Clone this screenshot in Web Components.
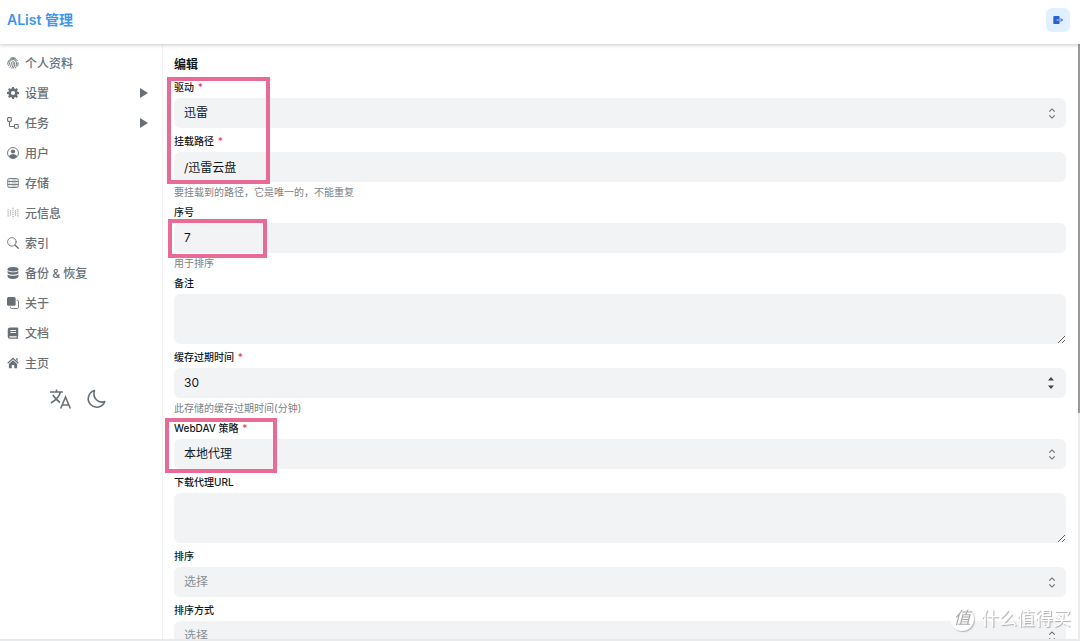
<!DOCTYPE html>
<html lang="zh-CN">
<head>
<meta charset="UTF-8">
<meta name="viewport" content="width=device-width, initial-scale=1.0">
<title>AList 管理</title>
<style>
  html, body { height: 100%; margin: 0; }
  body {
    font-family: Inter, "Noto Sans CJK SC", sans-serif;
    font-size: 12px;
    color: #11181c;
    background: #fff;
    overflow: hidden;
    --gris: #687076;
    --campo: #f1f3f5;
    --rosa: #ea6a96;
  }
</style>
</head>
<body>
<alist-app>
  <alist-header slot="header">AList 管理</alist-header>
  <side-menu slot="menu">
    <side-item icon="finger">个人资料</side-item>
    <side-item icon="gear" submenu>设置</side-item>
    <side-item icon="flow" submenu>任务</side-item>
    <side-item icon="user">用户</side-item>
    <side-item icon="drive">存储</side-item>
    <side-item icon="meta">元信息</side-item>
    <side-item icon="search">索引</side-item>
    <side-item icon="database">备份 &amp; 恢复</side-item>
    <side-item icon="copy">关于</side-item>
    <side-item icon="book">文档</side-item>
    <side-item icon="home">主页</side-item>
  </side-menu>
  <storage-form></storage-form>
</alist-app>
<water-mark>什么值得买</water-mark>

<script>
  const icons = {
    finger: '<g fill="none" stroke="currentColor" stroke-width="1.300" stroke-linecap="round"><path d="M2 5.500A7 7 0 0 1 14 5M.9 9.500A8 8 0 0 1 2 5.500M2 12c1.500-1.700 1-4 2-6a4.500 4.500 0 0 1 8.500 1c.4 2 .2 3.500-.3 5M4 13.700c2-2 1.300-4.500 2-6.200a2.300 2.300 0 0 1 4.300.7c.2 2.500-.4 4.500-1.800 6.800M6.300 14.800C8 12.500 8.300 10.500 8.200 8.300M14.700 7.500c.2 1.800 0 3.200-.5 4.500M11.900 13.500l-.7 1.200M5 1.500a7.500 7.500 0 0 1 6 0"/></g>',
    gear: '<path fill-rule="evenodd" d="M6.700 0h2.600l.4 2 1.400.6 1.700-1.200 1.800 1.800-1.200 1.700.6 1.400 2 .4v2.600l-2 .4-.6 1.400 1.200 1.700-1.800 1.800-1.700-1.200-1.400.6-.4 2H6.700l-.4-2-1.400-.6-1.700 1.200-1.800-1.800 1.200-1.700L2 9.700l-2-.4V6.700l2-.4.6-1.400-1.200-1.700 1.800-1.800 1.700 1.200L6.300 2zM8 5.200a2.800 2.800 0 1 0 0 5.600 2.800 2.800 0 0 0 0-5.600z"/>',
    flow: '<g fill="none" stroke="currentColor" stroke-width="1.400"><rect x=".8" y=".8" width="5" height="5" rx="1"/><rect x="10" y="10" width="5" height="5" rx="1"/><path d="M3.300 6v5.500c0 .8.400 1.200 1.200 1.200H10"/></g>',
    user: '<circle cx="8" cy="8" r="7.300" fill="none" stroke="currentColor" stroke-width="1.200"/><circle cx="8" cy="6" r="2.800"/><path d="M2.600 12.700C3.500 10.400 5.500 9.800 8 9.800s4.500.6 5.400 2.900A7 7 0 0 1 8 15.200a7 7 0 0 1-5.400-2.500z"/>',
    drive: '<g fill="none" stroke="currentColor" stroke-width="1.200"><rect x="1" y="2" width="14" height="12" rx="2"/><path d="M1 6h14M1 10h14"/><path d="M6 4h7M6 8h7M6 12h7" stroke-width=".8"/></g><path d="M3 3.500h1.300v1H3zM3 7.500h1.300v1H3zM3 11.500h1.300v1H3z"/>',
    meta: '<g fill="none" stroke="currentColor" stroke-width="1.300" stroke-dasharray="1.500 1.200" opacity=".8"><path d="M1.500 3v10M4.700 4.500v8M8 1v14M11.300 4.500v8M14.500 3v10"/></g>',
    search: '<g fill="none" stroke="currentColor" stroke-width="1.200" stroke-linecap="round"><circle cx="6.500" cy="6.500" r="5.700"/><path d="M10.700 10.700L15 15" stroke-width="1.700"/></g>',
    database: '<ellipse cx="8" cy="3" rx="7.200" ry="2.900"/><path d="M.8 5c1 1.500 4.200 2 7.200 2s6.200-.5 7.200-2v2.500C15.200 9 12 10.200 8 10.200S.8 9 .8 7.500zM.8 9.500c1 1.500 4.200 2 7.200 2s6.200-.5 7.200-2V13c0 1.500-3.200 2.900-7.200 2.900S.8 14.500.8 13z"/>',
    copy: '<rect x="0" y="0" width="11.500" height="11.500" rx="2"/><path d="M13 4.500h.8c.8 0 1.500.6 1.500 1.500v7.800c0 .8-.7 1.500-1.500 1.500H6c-.9 0-1.500-.7-1.500-1.500V13" fill="none" stroke="currentColor" stroke-width="1.200"/>',
    book: '<path fill-rule="evenodd" d="M4 .5h9.500c.8 0 1.500.6 1.500 1.500v9.500c0 .5-.3.800-.6 1v1.600c.4.200.6.400.6.700 0 .4-.3.700-.8.700H4a3 3 0 0 1-3-3v-9a3 3 0 0 1 3-3zM4.500 4v1.300h7.500V4zm0 2.700V8h7.500V6.700zM4 12.200a.9.900 0 0 0 0 1.800h8.700v-1.800z"/>',
    home: '<path d="M8 .8l7.600 7-1 1.100L8 2.900 1.400 8.900l-1-1.100zM12.200 1.500h2v4l-2-1.900zM8 4.200l5.500 5V15H9.700v-4.500H6.300V15H2.500V9.200z"/>',
    exit: '<path d="M2 1.500h7c1 0 1.500.6 1.500 1.500v10c0 1-.5 1.500-1.500 1.500H2c-1 0-1.500-.5-1.500-1.500V3c0-1 .5-1.500 1.500-1.500z"/><path d="M5.500 8h5" stroke="#e1f0ff" stroke-width="1.300"/><path d="M10.500 8h4.700M12.500 5.300L15.200 8l-2.700 2.700" fill="none" stroke="currentColor" stroke-width="1.500"/>'
  };

  const svg = (name) => `<svg viewBox="0 0 16 16" fill="currentColor" aria-hidden="true">${icons[name]}</svg>`;

  class AlistApp extends HTMLElement {
    constructor() {
      super();
      this.attachShadow({ mode: 'open' }).innerHTML = `
        <style>
          :host {
            display: flex;
            flex-direction: column;
            height: 100vh;
          }
          .cuerpo {
            flex: 1;
            min-height: 0;
            display: flex;
          }
          main {
            flex: 1;
            min-width: 0;
            overflow: auto;
            scrollbar-width: none;
          }
          .barra {
            width: 2px;
            background: #ebebeb;
          }
          .barra div {
            height: 62%;
            background: #999;
          }
          footer {
            height: 2px;
            background: #e9eaeb;
          }
        </style>
        <slot name="header"></slot>
        <div class="cuerpo">
          <slot name="menu"></slot>
          <main><slot></slot></main>
          <div class="barra"><div></div></div>
        </div>
        <footer></footer>
      `;
    }
  }
  customElements.define('alist-app', AlistApp);

  class AlistHeader extends HTMLElement {
    constructor() {
      super();
      this.attachShadow({ mode: 'open' }).innerHTML = `
        <style>
          :host {
            display: flex;
            align-items: center;
            justify-content: space-between;
            height: 44px;
            padding: 0 10px 4px 7px;
            box-sizing: border-box;
            box-shadow: 0 1px 4px rgba(0, 0, 0, .22);
            z-index: 1;
          }
          a {
            font-size: 14px;
            font-weight: 600;
            line-height: 20px;
            color: #4094f0;
            text-decoration: none;
          }
          button {
            display: grid;
            place-items: center;
            width: 24px;
            height: 24px;
            padding: 0;
            border: none;
            border-radius: 6px;
            background: #e1f0ff;
            color: #2862d2;
            cursor: pointer;
          }
          svg { width: 10px; height: 10px; }
        </style>
        <a href="#"><slot></slot></a>
        <button type="button" aria-label="logout">${svg('exit')}</button>
      `;
    }
  }
  customElements.define('alist-header', AlistHeader);

  class SideMenu extends HTMLElement {
    constructor() {
      super();
      this.attachShadow({ mode: 'open' }).innerHTML = `
        <style>
          :host {
            display: block;
            width: 162px;
            padding-top: 4px;
            box-sizing: content-box;
            border-right: 1px solid #f1f2f4;
            color: var(--gris);
          }
          .ajustes {
            display: flex;
            justify-content: center;
            gap: 12px;
            padding: 9px 6px 0 0;
          }
          button {
            padding: 0;
            border: none;
            background: none;
            color: inherit;
            width: 24px;
            height: 24px;
            cursor: pointer;
          }
          svg { display: block; width: 24px; height: 24px; }
        </style>
        <nav><slot></slot></nav>
        <div class="ajustes">
          <button type="button" aria-label="language">
            <svg viewBox="0 0 24 24" fill="none" stroke="currentColor" stroke-width="1.600">
              <path d="M2 5h13M8.500 2.500V5M12.500 5C11.500 9 8 13 3 16M4.800 8c2 3 4.300 5.400 7.200 7.500M12.700 21.500L17.500 10l4.800 11.500M14.300 18h6.400"/>
            </svg>
          </button>
          <button type="button" aria-label="theme">
            <svg viewBox="0 0 24 24" fill="none" stroke="currentColor" stroke-width="1.600" stroke-linejoin="round">
              <path d="M10.500 3.500A8.500 8.500 0 1 0 20.800 14.500C14.500 17 8 11 10.500 3.500z"/>
            </svg>
          </button>
        </div>
      `;
    }
  }
  customElements.define('side-menu', SideMenu);

  class SideItem extends HTMLElement {
    constructor() {
      super();
      this.attachShadow({ mode: 'open' });
    }

    connectedCallback() {
      const flecha = this.hasAttribute('submenu')
        ? '<svg class="flecha" viewBox="0 0 8 10" fill="currentColor"><path d="M0 0l8 5-8 5z"/></svg>'
        : '';
      this.shadowRoot.innerHTML = `
        <style>
          :host { display: block; }
          a {
            display: flex;
            align-items: center;
            gap: 6px;
            height: 30px;
            padding: 0 14px 0 7px;
            color: inherit;
            font-weight: 500;
            text-decoration: none;
          }
          span {
            flex: 1;
            padding-bottom: 2px;
          }
          svg { width: 12px; height: 12px; }
          .flecha { width: 8px; height: 10px; }
        </style>
        <a href="#">${svg(this.getAttribute('icon'))}<span><slot></slot></span>${flecha}</a>
      `;
    }
  }
  customElements.define('side-item', SideItem);

  class FormField extends HTMLElement {
    constructor() {
      super();
      this.attachShadow({ mode: 'open' });
      this._data = null;
    }

    set data(objeto) {
      this._data = objeto;
      this.render();
    }

    control() {
      const { tipo, valor } = this._data;
      if (tipo === 'select') {
        return `
          <select id="campo" class="${valor === '选择' ? 'vacio' : ''}"><option>${valor}</option></select>
          <svg viewBox="0 0 8 12" fill="none" stroke="#687076" stroke-width="1.200"><path d="M1 4l3-3 3 3M1 8l3 3 3-3"/></svg>`;
      }
      if (tipo === 'textarea') {
        return '<textarea id="campo"></textarea>';
      }
      if (tipo === 'stepper') {
        return `
          <input id="campo" type="number" value="${valor}">
          <svg class="pasos" viewBox="0 0 8 14" fill="#444"><path d="M1 4.500L4 1l3 3.500zM1 9.500L4 13l3-3.500z"/></svg>`;
      }
      return `<input id="campo" type="text" value="${valor}">`;
    }

    render() {
      const { titulo, requerido, ayuda } = this._data;
      this.shadowRoot.innerHTML = `
        <style>
          :host {
            display: grid;
            gap: 3px;
          }
          label {
            font-size: 10px;
            font-weight: 500;
            line-height: 16px;
          }
          label span {
            margin-left: 1px;
            color: #e5484d;
          }
          .caja {
            display: grid;
            align-items: center;
          }
          .caja > * { grid-area: 1 / 1; }
          input, select, textarea {
            display: block;
            width: 100%;
            height: 30px;
            margin: 0;
            padding: 0 10px 1px;
            box-sizing: border-box;
            border: none;
            border-radius: 6px;
            outline: none;
            background: var(--campo);
            color: inherit;
            font: inherit;
            appearance: none;
          }
          input[type=number] { appearance: textfield; }
          .vacio { color: #889096; }
          textarea {
            height: 50px;
            padding: 6px 10px;
            resize: vertical;
          }
          svg {
            justify-self: end;
            width: 8px;
            height: 11px;
            margin-right: 10px;
            pointer-events: none;
          }
          .pasos {
            height: 14px;
            margin-right: 11px;
          }
          p {
            margin: 0;
            font-size: 10px;
            line-height: 14px;
            color: #7b8288;
          }
        </style>
        <label for="campo">${titulo}${requerido ? ' <span>*</span>' : ''}</label>
        <div class="caja">${this.control()}</div>
        ${ayuda ? `<p>${ayuda}</p>` : ''}
      `;
    }
  }
  customElements.define('form-field', FormField);

  const campos = [
    { titulo: '驱动', tipo: 'select', valor: '迅雷', requerido: true },
    { titulo: '挂载路径', tipo: 'text', valor: '/迅雷云盘', requerido: true, ayuda: '要挂载到的路径，它是唯一的，不能重复' },
    { titulo: '序号', tipo: 'text', valor: '7', ayuda: '用于排序' },
    { titulo: '备注', tipo: 'textarea' },
    { titulo: '缓存过期时间', tipo: 'stepper', valor: '30', requerido: true, ayuda: '此存储的缓存过期时间(分钟)' },
    { titulo: 'WebDAV 策略', tipo: 'select', valor: '本地代理', requerido: true },
    { titulo: '下载代理URL', tipo: 'textarea' },
    { titulo: '排序', tipo: 'select', valor: '选择' },
    { titulo: '排序方式', tipo: 'select', valor: '选择' }
  ];

  class StorageForm extends HTMLElement {
    constructor() {
      super();
      this.attachShadow({ mode: 'open' }).innerHTML = `
        <style>
          :host {
            display: block;
            position: relative;
            padding: 12px 12px 12px 11px;
          }
          form {
            display: grid;
            gap: 5px;
          }
          h2 {
            margin: 0;
            font-size: 12px;
            font-weight: 700;
            line-height: 18px;
          }
          /* pink frames drawn over the fields */
          .marco {
            position: absolute;
            box-sizing: border-box;
            border: 4px solid var(--rosa);
            pointer-events: none;
          }
          .uno { left: 4px; top: 33px; width: 103px; height: 107px; }
          .dos { left: 5px; top: 175px; width: 99px; height: 39px; }
          .tres { left: 2px; top: 374px; width: 112px; height: 55px; }
        </style>
        <form><h2>编辑</h2></form>
        <div class="marco uno"></div>
        <div class="marco dos"></div>
        <div class="marco tres"></div>
      `;
      const form = this.shadowRoot.querySelector('form');
      campos.forEach(campo => {
        const field = document.createElement('form-field');
        field.data = campo;
        form.appendChild(field);
      });
    }
  }
  customElements.define('storage-form', StorageForm);

  class WaterMark extends HTMLElement {
    constructor() {
      super();
      this.attachShadow({ mode: 'open' }).innerHTML = `
        <style>
          :host {
            position: fixed;
            right: 9px;
            bottom: 9px;
            display: flex;
            align-items: center;
            gap: 7px;
            font-size: 18px;
            line-height: 26px;
            color: #fff;
            text-shadow: 1px 1px 1px rgba(0, 0, 0, .32);
            pointer-events: none;
            z-index: 2;
          }
          .sello {
            width: 24px;
            height: 24px;
            border-radius: 50%;
            background: #fff;
            box-shadow: 1px 1px 1px rgba(0, 0, 0, .25);
            color: #aaa;
            font-size: 17px;
            font-style: italic;
            line-height: 23px;
            text-align: center;
            text-shadow: none;
          }
        </style>
        <span class="sello">值</span>
        <slot></slot>
      `;
    }
  }
  customElements.define('water-mark', WaterMark);
</script>
</body>
</html>
